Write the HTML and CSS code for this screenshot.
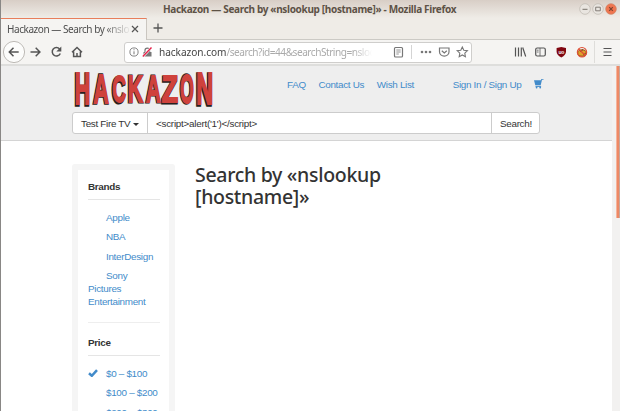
FILE: index.html
```html
<!DOCTYPE html>
<html lang="en">
<head>
<meta charset="utf-8">
<title>Hackazon — Search by «nslookup [hostname]»</title>
<link rel="stylesheet" href="styles.css">
</head>
<body>
<div class="window">
  <div class="titlebar">
    <span class="window-title">Hackazon — Search by «nslookup [hostname]» - Mozilla Firefox</span>
    <svg class="window-buttons" width="38" height="12" viewBox="0 0 38 12">
      <circle cx="6" cy="6" r="5.3" fill="#e9e5e0" stroke="#bdb7b0" stroke-width=".7"/><path d="M3.5 6.3h5" stroke="#77726b"/>
      <circle cx="19" cy="6" r="5.3" fill="#e9e5e0" stroke="#bdb7b0" stroke-width=".7"/><path d="M16.7 4.2h4.6v3.6h-4.6z" fill="none" stroke="#77726b" stroke-width=".9"/>
      <circle cx="32" cy="6" r="5.3" fill="#ef7650" stroke="#cf8060" stroke-width=".7"/><path d="M30.2 4.2l3.6 3.6m0-3.6l-3.6 3.6" stroke="#7c4330" stroke-width="1.2"/>
    </svg>
  </div>
  <div class="tabs">
    <div class="tab"><span class="tab-label">Hackazon — Search by «nslo</span>
      <svg width="8" height="8" viewBox="0 0 8 8"><path d="M1 1l6 6M7 1l-6 6" stroke="#555" stroke-width="1.2"/></svg>
    </div>
    <svg class="plus" width="10" height="10" viewBox="0 0 10 10"><path d="M5 .5v9M.5 5h9" stroke="#555" stroke-width="1.3"/></svg>
  </div>
  <div class="toolbar">
    <svg class="nav-icons" width="90" height="26" viewBox="0 0 90 26" fill="none" stroke="#555" stroke-width="1.5">
      <circle cx="13" cy="13" r="10.6" fill="#fcfcfb" stroke="#bebbb7" stroke-width="1"/>
      <path d="M17.7 13H8.5M12.5 8.8L8.3 13l4.2 4.2M29.5 13h9.3M34.7 8.8l4.2 4.2-4.2 4.2"/>
      <path d="M58.6 10A4.2 4.2 0 1 0 59.3 14.5"/><path d="M60.3 7.6v5h-5z" fill="#555" stroke="none"/>
      <path d="M71 13.2L76 8.5l5 4.7M72.6 12.5v5h6.8v-5M76 17.5V14"/>
    </svg>
    <div class="url">
      <svg class="site-icons" width="32" height="14" viewBox="0 0 32 14">
        <circle cx="7" cy="7" r="4.1" fill="none" stroke="#777" stroke-width=".9"/><path d="M7 6.3v3M7 4.3v1" stroke="#777"/>
        <path d="M16.5 7h8v4.5h-8z" fill="#777"/><path d="M18 7V5.3q0-2.2 2.3-2.2t2.3 2.2V7" fill="none" stroke="#777" stroke-width="1.2"/><path d="M15.8 11.8L24.5 2.4" stroke="#fff" stroke-width="2.4"/><path d="M15.8 11.4L24.5 2.4" stroke="#e52149" stroke-width="1.4"/>
      </svg>
      <span class="address"><b>hackazon.com</b>/search?id=44&amp;searchString=nsloo</span>
      <svg class="url-actions" width="80" height="16" viewBox="0 0 80 16" fill="none" stroke="#777">
        <rect x="3.5" y="3.5" width="8" height="9.5" rx="1" stroke-width="1.2"/><path d="M5.3 6h4.4M5.3 8h4.4M5.3 10h2.5" stroke-width=".8"/>
        <path d="M20.5 1v14" stroke="#d4d4d4"/>
        <g fill="#777" stroke="none"><circle cx="31" cy="8" r="1.3"/><circle cx="35" cy="8" r="1.3"/><circle cx="39" cy="8" r="1.3"/></g>
        <path d="M48.5 4h9.5v3.8a4.7 4.2 0 0 1-9.5 0zM50.8 6.7l2.5 2.3 2.5-2.3" stroke-width="1.2"/>
        <path d="M71.3 3l1.5 3.2 3.6.5-2.6 2.4.6 3.6-3.1-1.7-3.1 1.7.6-3.6-2.6-2.4 3.6-.5z" stroke-width="1.1"/>
      </svg>
    </div>
    <svg class="tools" width="106" height="24" viewBox="0 0 106 24" fill="none" stroke="#555">
      <path d="M1.5 7.5v9M4.5 7.5v9M7.3 7.5v9M8.7 7.5l3 9" stroke-width="1.2"/>
      <rect x="21.7" y="8" width="9.6" height="8" rx="1.5" stroke-width="1.2"/><path d="M26 8v8M22.8 10.2h1.8M22.8 12h1.8" stroke-width=".8"/>
      <path d="M47.3 7l4.7 1v3.5q0 3.6-4.7 6-4.7-2.4-4.7-6V8z" fill="#800610" stroke="none"/>
      <text x="47.3" y="13.7" font-family="Liberation Sans" font-size="5" font-weight="bold" text-anchor="middle" fill="#eee" stroke="none">uo</text>
      <ellipse cx="68" cy="13" rx="4.3" ry="3.2" fill="#dfa02a" stroke="#8e501e" stroke-width="1"/><path d="M65 10l2 2 2-3M69 15l3-2" stroke="#805020"/><circle cx="68" cy="12.2" r="4.7" stroke="#df4e34" stroke-width="1.1"/><path d="M64.5 9l7 6.5" stroke="#df4e34" stroke-width="1.2"/>
      <path d="M80.5 1v22" stroke="#deddda"/><path d="M89.5 8.5h8M89.5 12h8M89.5 15.5h8" stroke-width="1.2"/>
    </svg>
  </div>
  <div class="viewport">
    <div class="page">
      <header class="header">
        <div class="masthead">
          <svg class="logo" width="141" height="39" viewBox="0 0 141 39">
            <g class="logo-shade" transform="translate(-.6 .6)">
              <text transform="translate(1.8 36) scale(.63 1.3)">H</text><text transform="translate(20.5 34.8) scale(.62 1.21)">A</text><text transform="translate(39.2 34) scale(.56 1.11)">C</text><text transform="translate(54.8 33.6) scale(.62 1.1)">K</text><text transform="translate(73 33.6) scale(.6 1.1)">A</text><text transform="translate(88.8 34) scale(.78 1.1)">Z</text><text transform="translate(107 34.8) scale(.52 1.2)">O</text><text transform="translate(123.2 36) scale(.69 1.3)">N</text>
            </g>
            <g class="logo-face">
              <text transform="translate(1.8 36) scale(.63 1.3)">H</text><text transform="translate(20.5 34.8) scale(.62 1.21)">A</text><text transform="translate(39.2 34) scale(.56 1.11)">C</text><text transform="translate(54.8 33.6) scale(.62 1.1)">K</text><text transform="translate(73 33.6) scale(.6 1.1)">A</text><text transform="translate(88.8 34) scale(.78 1.1)">Z</text><text transform="translate(107 34.8) scale(.52 1.2)">O</text><text transform="translate(123.2 36) scale(.69 1.3)">N</text>
            </g>
          </svg>
          <nav class="links"><a>FAQ</a><a>Contact Us</a><a>Wish List</a><a class="sign">Sign In / Sign Up</a>
            <svg class="cart" width="10" height="10" viewBox="0 0 10 10"><path d="M0 1.2h6.8L7.4 0H9.5v.8H8L6.7 6.2H1.3z" fill="#428bca"/><path d="M1.5 7.4h5.6" stroke="#428bca"/><circle cx="2.6" cy="8.6" r=".9" fill="#428bca"/><circle cx="6.2" cy="8.6" r=".9" fill="#428bca"/></svg>
          </nav>
        </div>
        <div class="search"><span class="category">Test Fire TV <i class="caret"></i></span><span class="query">&lt;script&gt;alert('1')&lt;/script&gt;</span><span class="submit">Search!</span></div>
      </header>
      <main class="content">
        <aside class="sidebar">
          <h2>Brands</h2>
          <ul><li>Apple</li><li>NBA</li><li>InterDesign</li><li>Sony<br>Pictures<br>Entertainment</li></ul>
          <h2 class="second">Price</h2>
          <ul><li class="checked"><svg width="10" height="8" viewBox="0 0 10 8"><path d="M1 4.3L3.8 6.8 9 1.2" fill="none" stroke="#428bca" stroke-width="2.5"/></svg><span>$0 – $100</span></li><li>$100 – $200</li><li>$200 – $300</li></ul>
        </aside>
        <h1>Search by «nslookup<br>[hostname]»</h1>
      </main>
    </div>
    <div class="scrollbar"><div class="thumb"></div></div>
  </div>
</div>
</body>
</html>
```
FILE: styles.css
```css
* { box-sizing: border-box; }
body { margin: 0; overflow: hidden; font-family: "Liberation Sans", sans-serif; font-size: 9.9px; letter-spacing: -.31px; }
svg { display: block; flex: none; }
.window { width: 620px; height: 411px; border-left: 1px solid #898785; display: flex; flex-direction: column; overflow: hidden; background: #f3f2f0; }
.titlebar { height: 18px; flex: none; display: flex; background: linear-gradient(#d8cec6, #efece7); font-family: "Noto Sans", sans-serif; }
.window-title { width: 295px; margin-left: 162px; font-size: 10px; line-height: 18px; font-weight: bold; color: #5d5246; white-space: nowrap; letter-spacing: -.33px; }
.window-buttons { margin: 3px 0 0 121px; }
.tabs { height: 22px; flex: none; display: flex; background: #efece7; border-bottom: 1px solid #cccac5; font-family: "Noto Sans", sans-serif; }
.tab { width: 146px; height: 22px; padding: 0 7px 1px 6px; display: flex; align-items: center; justify-content: space-between; border-top: 1px solid #e87e5c; border-right: 1px solid #cac6c0; background: #f5f4f2; }
.tab-label { width: 123px; overflow: hidden; white-space: nowrap; font-size: 10px; letter-spacing: -.44px; color: #4e4e4e; mask-image: linear-gradient(to right, #000 78%, transparent 101%); }
.plus { margin: 5px 0 0 6px; }
.toolbar { height: 26px; flex: none; display: flex; align-items: center; background: #f5f4f2; border-bottom: 2px solid #dededc; }
.url { width: 349px; height: 21px; margin-left: 33px; display: flex; align-items: center; background: #fff; border: 1px solid #cfcecc; border-radius: 3px; }
.site-icons { margin-left: 2px; }
.address { width: 213px; overflow: hidden; white-space: nowrap; font: 10.1px "Noto Sans", sans-serif; letter-spacing: -.48px; color: #aaa; mask-image: linear-gradient(to right, #000 91%, transparent); }
.address b { color: #444; font-weight: normal; letter-spacing: -.05px; }
.url-actions { margin-left: 19px; }
.tools { margin-left: 42px; }
.viewport { flex: 1; display: flex; min-height: 0; }
.page { width: 611px; overflow: hidden; background: #fff; }
.header { height: 75px; padding: 2px 0 0 71px; background: #eee; border-bottom: 1px solid #d4d4d4; }
.masthead { height: 44px; display: flex; padding-left: 1px; }
.logo { overflow: visible; letter-spacing: 0; }
.logo text { font-family: "Liberation Sans", sans-serif; font-size: 34px; font-weight: bold; }
.logo-shade { fill: #262020; stroke: #262020; stroke-width: 2.8px; }
.logo-face { fill: #cf423c; stroke: #cf423c; stroke-width: 1.7px; }
.links { display: flex; align-items: flex-start; margin-left: 73px; padding-top: 11px; line-height: 11px; color: #428bca; white-space: nowrap; }
.links a { margin-right: 12.6px; }
.links .sign { margin-left: 26px; }
.search { width: 468px; height: 22px; display: flex; color: #333; line-height: 22px; border: 1px solid #ccc; border-radius: 3px; background: #fff; }
.category { width: 75px; padding-left: 8px; border-right: 1px solid #ccc; }
.caret { display: inline-block; border: 3px solid transparent; border-top-color: #333; border-bottom: 0; vertical-align: 1px; }
.query { width: 344px; padding-left: 8px; border-right: 1px solid #ccc; letter-spacing: -.26px; }
.submit { padding-left: 8px; }
.content { display: flex; padding: 23px 0 0 71px; align-items: flex-start; }
.sidebar { width: 103px; height: 265px; padding: 11px 9px 0 10px; border: 6px solid #f5f5f5; border-radius: 3px; color: #428bca; line-height: 13px; }
.sidebar h2 { margin: 0 0 10.5px; padding-bottom: 6px; border-bottom: 1px solid #e5e5e5; color: #333; font-size: 9.9px; line-height: 12px; }
.sidebar .second { margin-top: 14px; padding-top: 14px; border-top: 1px solid #eee; }
.sidebar ul { list-style: none; margin: 0; padding: 0; white-space: nowrap; }
.sidebar li { margin-bottom: 6.5px; text-indent: 18px; }
.sidebar .checked { display: flex; align-items: center; text-indent: 0; }
.checked span { margin-left: 8px; }
h1 { margin: 0 0 0 20px; font: 500 19.5px/21.7px "Noto Sans", sans-serif; letter-spacing: -.3px; color: #333; }
.scrollbar { width: 8px; padding-left: 4px; background: #f2f1f0; }
.thumb { height: 152px; background: #ee8965; border-left: 1px solid #f4b49d; border-right: 1px solid #c8a79b; }
```
